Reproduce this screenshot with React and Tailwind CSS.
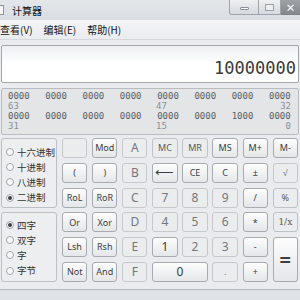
import React from 'react';

const bits = [
  ['0000', '0000', '0000', '0000', '0000', '0000', '0000', '0000'],
  ['0000', '0000', '0000', '0000', '0000', '0000', '1000', '0000'],
];

const Btn = ({ children, on, mid, className = '' }) => (
  <div
    className={`flex items-center justify-center rounded-[3px] border ${
      on
        ? 'border-[#a7abb0] bg-linear-to-b from-[#fdfdfd] to-[#e4e6e8] text-[#3a3e43]'
        : mid
        ? 'border-[#bfc3c7] bg-[#eaeced] text-[#55595e]'
        : 'border-[#c6c9cc] bg-[#eaeced] text-[#74787d]'
    } ${className}`}
  >
    {children}
  </div>
);

const Radio = ({ label, checked }) => (
  <div className="flex h-[15.3px] items-center gap-[3px]">
    <span className="flex h-[8px] w-[8px] items-center justify-center rounded-full border border-[#a3a7ab] bg-[#f7f7f7]">
      {checked && <span className="h-[4px] w-[4px] rounded-full bg-[#3c3f43]" />}
    </span>
    <span>{label}</span>
  </div>
);

export default function App() {
  const sm = 'text-[9px]';
  const big = 'text-[12px]';
  return (
    <div className="flex h-[300px] w-[300px] flex-col overflow-hidden bg-[#e9ebee] font-['Noto_Sans_CJK_SC','Noto_Sans',sans-serif] text-[#222]">
      {/* title bar */}
      <div className="flex h-[20px] items-center bg-linear-to-b from-[#e4e7ea] to-[#d9dde1]">
        <div className="ml-[-4px] h-[10px] w-[8px] border border-[#8d949b] bg-[#f4f6f8]" />
        <span className="ml-[8px] text-[10px] text-[#111]">计算器</span>
        <div className="ml-auto flex h-[15px] self-start">
          <div className="flex w-[30px] items-center justify-center rounded-bl-[3px] border border-t-0 border-[#9ea4aa] bg-linear-to-b from-[#eef0f2] to-[#d6dade]">
            <span className="mt-[3px] h-[3px] w-[9px] rounded-[1px] border border-[#8a9096] bg-white" />
          </div>
          <div className="flex w-[22px] items-center justify-center border border-l-0 border-t-0 border-[#9ea4aa] bg-linear-to-b from-[#eef0f2] to-[#d6dade]">
            <span className="h-[7px] w-[9px] border border-[#9ba1a7] bg-[#eceef0]" />
          </div>
          <div className="flex w-[19px] items-center justify-center border-b border-[#7d8287] bg-linear-to-b from-[#9ea2a6] to-[#84898e] text-[10px] font-bold text-white">
            ×
          </div>
        </div>
      </div>
      {/* menu */}
      <div className="flex h-[20px] items-center gap-[11px] border-b border-[#d6d9dc] bg-linear-to-b from-[#f4f5f7] to-[#e9ebee] text-[10px] text-[#111]">
        <span className="ml-0">查看(V)</span>
        <span>编辑(E)</span>
        <span>帮助(H)</span>
      </div>

      <div className="flex flex-col px-[1px] pt-[5px]">
        {/* display */}
        <div className="flex h-[38px] items-end justify-end rounded-[2px] border border-[#a2a8ae] bg-linear-to-b from-[#edf0f2] via-white to-white pb-[5px] pr-[2px]">
          <span className="font-['DejaVu_Sans_Mono',monospace] text-[17px] leading-none text-[#3a3a3a]">10000000</span>
        </div>
        {/* bits */}
        <div className="mt-[5px] flex h-[47px] flex-col rounded-[2px] border border-[#b9bdc1] bg-[#e3e5e7] px-[6px] pt-[2px] font-['DejaVu_Sans_Mono',monospace] text-[9px] leading-[10px]">
          {bits.map((row, r) => (
            <React.Fragment key={r}>
              <div className="flex justify-between pr-[1px] text-[#5a5e62]">
                {row.map((b, i) => (
                  <span key={i} className="w-[22px]">{b}</span>
                ))}
              </div>
              <div className="flex h-[10px] pr-[1px] text-[#8c9094]">
                <span className="w-[148px]">{r === 0 ? '63' : '31'}</span>
                <span>{r === 0 ? '47' : '15'}</span>
                <span className="ml-auto">{r === 0 ? '32' : '0'}</span>
              </div>
            </React.Fragment>
          ))}
        </div>

        {/* keypad */}
        <div className="mt-[3px] flex gap-[5px]">
          <div className="flex w-[56px] flex-col gap-[4px] text-[9.5px] text-[#333]">
            <div className="flex h-[70px] flex-col rounded-[3px] border border-[#bcc0c4] bg-[#eceef0] pl-[4px] pt-[5px]">
              <Radio label="十六进制" />
              <Radio label="十进制" />
              <Radio label="八进制" />
              <Radio label="二进制" checked />
            </div>
            <div className="flex h-[70px] flex-col rounded-[3px] border border-[#bcc0c4] bg-[#eceef0] pl-[4px] pt-[4px]">
              <Radio label="四字" checked />
              <Radio label="双字" />
              <Radio label="字" />
              <Radio label="字节" />
            </div>
          </div>

          <div className="grid grid-cols-[repeat(8,25.3px)] grid-rows-[repeat(6,20px)] gap-x-[4.8px] gap-y-[4.8px] font-['Noto_Sans',sans-serif]">
            <Btn />
            <Btn on className={sm}>Mod</Btn>
            <Btn className={big}>A</Btn>
            <Btn mid className={sm}>MC</Btn>
            <Btn mid className={sm}>MR</Btn>
            <Btn on className={sm}>MS</Btn>
            <Btn on className={sm}>M+</Btn>
            <Btn on className={sm}>M-</Btn>

            <Btn on className={sm}>(</Btn>
            <Btn on className={sm}>)</Btn>
            <Btn className={big}>B</Btn>
            <Btn on className="text-[13px]">⟵</Btn>
            <Btn on className={sm}>CE</Btn>
            <Btn on className={sm}>C</Btn>
            <Btn on className={sm}>±</Btn>
            <Btn className={sm}>√</Btn>

            <Btn on className={sm}>RoL</Btn>
            <Btn on className={sm}>RoR</Btn>
            <Btn className={big}>C</Btn>
            <Btn className={big}>7</Btn>
            <Btn className={big}>8</Btn>
            <Btn className={big}>9</Btn>
            <Btn on className={sm}>/</Btn>
            <Btn mid className={sm}>%</Btn>

            <Btn on className={sm}>Or</Btn>
            <Btn on className={sm}>Xor</Btn>
            <Btn className={big}>D</Btn>
            <Btn className={big}>4</Btn>
            <Btn className={big}>5</Btn>
            <Btn className={big}>6</Btn>
            <Btn on className={sm}>*</Btn>
            <Btn mid className={`${sm} font-['DejaVu_Serif',serif]`}>1/x</Btn>

            <Btn on className={sm}>Lsh</Btn>
            <Btn on className={sm}>Rsh</Btn>
            <Btn className={big}>E</Btn>
            <Btn on className={big}>1</Btn>
            <Btn className={big}>2</Btn>
            <Btn className={big}>3</Btn>
            <Btn on className={sm}>-</Btn>
            <Btn on className="row-span-2 text-[20px] font-bold">=</Btn>

            <Btn on className={sm}>Not</Btn>
            <Btn on className={sm}>And</Btn>
            <Btn className={big}>F</Btn>
            <Btn on className={`col-span-2 ${big}`}>0</Btn>
            <Btn className={sm}>.</Btn>
            <Btn on className={sm}>+</Btn>
          </div>
        </div>
      </div>

      {/* bottom frame */}
      <div className="mt-[7px] h-[1px] bg-[#b3b8bd]" />
      <div className="flex-1 bg-[#dfe3e7]" />
    </div>
  );
}
